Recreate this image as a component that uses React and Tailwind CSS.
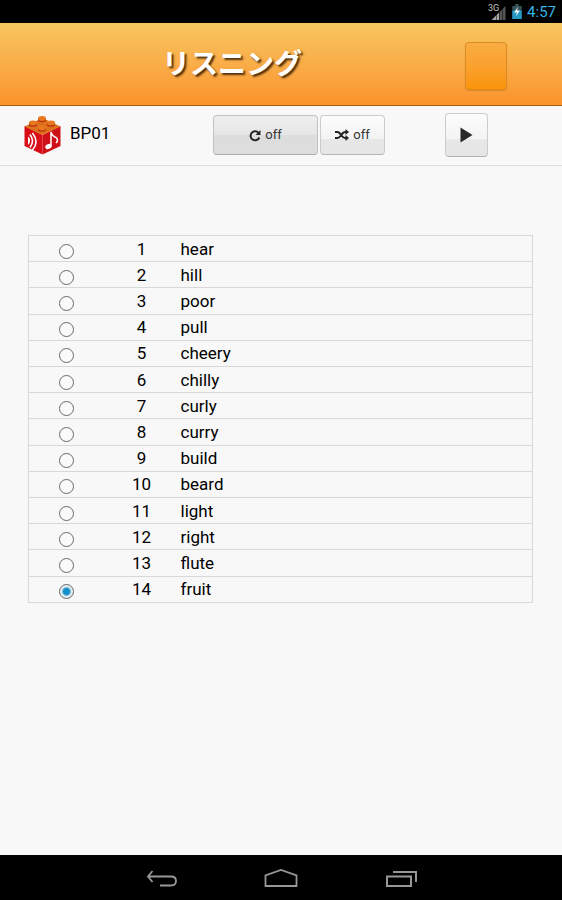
import { useState } from 'react';

const words = [
  'hear', 'hill', 'poor', 'pull', 'cheery', 'chilly', 'curly',
  'curry', 'build', 'beard', 'light', 'right', 'flute', 'fruit',
];

function StatusBar() {
  return (
    <div className="flex h-[23px] shrink-0 items-center justify-end bg-black pr-[6px] font-[Roboto,sans-serif]">
      <svg width="18" height="18" viewBox="0 0 18 18" aria-label="3G signal" role="img">
        <path d="M17.500 3V17H14.500V6ZM14 6.500V17H11.500V9Z" fill="#555" />
        <path d="M11 9.500V17H8.500V12ZM8 12.500V17H3.500Z" fill="#a4a4a4" />
        <text x="0" y="8" fontSize="9" fill="#c4c4c4" fontFamily="Roboto, sans-serif">3G</text>
      </svg>
      <svg className="ml-[6px]" width="10" height="15" viewBox="0 0 10 16" aria-label="Battery" role="img">
        <path d="M3 0H7V2H10V16H0V2H3Z" fill="#34515c" />
        <path d="M0 7H10V16H0Z" fill="#279ac4" />
        <path d="M6 3L2 9H5L4 13L8 7H5Z" fill="#fff" />
      </svg>
      <span className="ml-[5px] pt-[2px] text-[15px] leading-[21px] text-[#33b5e5]">4:57</span>
    </div>
  );
}

function BrickIcon() {
  return (
    <svg className="shrink-0" width="37" height="40" viewBox="0 0 37 40" aria-hidden="true">
      <path d="M0.500 11L18.500 20V39.500L0.500 31Z" fill="#d80d18" />
      <path d="M36.500 11L18.500 20V39.500L36.500 31Z" fill="#d01019" />
      <path d="M18.500 3L36.500 11.500L18.500 20L0.500 11.500Z" fill="#de6f1c" />
      {[[18, 3.5], [9, 8], [27, 8], [18, 13]].map(([x, y]) => (
        <g key={`${x}-${y}`}>
          <path d={`M${x - 4} ${y}V${y + 1.5}A4 2.200 0 0 0 ${x + 4} ${y + 1.5}V${y}Z`} fill="#b8300f" />
          <ellipse cx={x} cy={y} rx="4" ry="2.400" fill="#e8781f" />
        </g>
      ))}
      <path d="M4 21.500Q8.500 25 4 30Z" fill="#fff" />
      <path d="M6 19.500Q11 26 6 32.500M8.500 18Q15.500 27 8.500 35" fill="none" stroke="#fff" strokeWidth="1.600" />
      <ellipse cx="24.500" cy="31.500" rx="3.300" ry="2.500" fill="#fff" transform="rotate(-20 24.500 31.500)" />
      <path d="M27 31V17Q28 21 32 22.500Q35 25 32 28" fill="none" stroke="#fff" strokeWidth="1.500" />
    </svg>
  );
}

function RepeatIcon() {
  return (
    <svg width="12" height="13" viewBox="0 0 12 13" aria-hidden="true">
      <path d="M9.500 3.800A4.500 4.500 0 1 0 10.300 8.500" fill="none" stroke="#252525" strokeWidth="2" />
      <path d="M11.500 1V6H6.500Z" fill="#252525" />
    </svg>
  );
}

function ShuffleIcon() {
  return (
    <svg width="14" height="12" viewBox="0 0 14 12" aria-hidden="true">
      <path d="M0 3H2.500C6 3 6.500 9 10 9H11M0 9H2.500C6 9 6.500 3 10 3H11" fill="none" stroke="#252525" strokeWidth="2.200" />
      <path d="M10.500 0L14 3L10.500 6ZM10.500 6L14 9L10.500 12Z" fill="#252525" />
    </svg>
  );
}

export default function App() {
  const [selected, setSelected] = useState(13);

  return (
    <div className="flex min-h-screen flex-col bg-[#f8f8f8] font-[Roboto,sans-serif] text-black">
      <StatusBar />

      <header className="flex h-[83px] shrink-0 items-center border-b border-[#a85b16] bg-linear-to-b from-[#f7c65f] to-[#fa932b]">
        <h1 className="flex-1 pb-1 text-center font-['Noto_Sans_CJK_JP',sans-serif] text-[28px] leading-[40px] font-bold text-white [text-shadow:2px_2px_2px_#53300c]">
          リスニング
        </h1>
        <div className="flex w-[98px] shrink-0 pt-1">
          <button
            type="button"
            aria-label="Menu"
            className="ml-px h-12 w-[42px] rounded-[4px] border border-[#dc8a24] bg-linear-to-b from-[#f9ad42] to-[#fb9406] shadow-[0_1px_1px_#b86d1a80]"
          />
        </div>
      </header>

      <section className="flex h-[60px] shrink-0 items-center border-b border-[#dedede] pr-[74px] pb-px pl-6" aria-label="Player">
        <div className="flex w-[189px] items-center gap-[9px]">
          <BrickIcon />
          <h2 className="pb-1 text-[17px] leading-6">BP01</h2>
        </div>
        <div className="flex gap-[2px]">
          <button
            type="button"
            aria-pressed="true"
            className="flex h-10 w-[105px] items-center justify-center gap-1 rounded-[4px] border border-[#c2c2c2] border-b-[#aaa] bg-[linear-gradient(#eeeeee,#e6e6e6_50%,#dcdcdc_51%,#dedede)] text-[13px] text-[#333]"
          >
            <RepeatIcon />
            off
          </button>
          <button
            type="button"
            className="flex h-10 w-[65px] items-center justify-center gap-1 rounded-[4px] border border-[#cccccc] border-b-[#b5b5b5] bg-[linear-gradient(#fcfcfc,#f3f3f3_60%,#e7e7e7_61%,#e6e6e6)] text-[13px] text-[#333]"
          >
            <ShuffleIcon />
            off
          </button>
        </div>
        <button
          type="button"
          aria-label="Play"
          className="ml-auto flex h-11 w-[43px] items-center justify-center rounded-[4px] border border-[#cccccc] border-b-[#b0b0b0] bg-[linear-gradient(#fcfcfc,#f3f3f3_60%,#e7e7e7_61%,#e6e6e6)]"
        >
          <svg width="13" height="16" viewBox="0 0 13 16" aria-hidden="true">
            <path d="M0.500 0.500L12.500 8L0.500 15.500Z" fill="#292929" />
          </svg>
        </button>
      </section>

      <main className="flex-1 pt-[69px] pr-[29px] pb-8 pl-7">
        <table className="h-[368px] w-full table-fixed border-collapse border border-[#d8d8d8] text-[17px] leading-5">
          <colgroup>
            <col className="w-[76px]" />
            <col className="w-[74px]" />
            <col />
          </colgroup>
          <tbody>
            {words.map((word, i) => (
              <tr key={word} className="border-b border-[#d8d8d8]">
                <td className="p-0 pt-[5px]">
                  <input
                    id={`word-${i}`}
                    type="radio"
                    name="word"
                    checked={selected === i}
                    onChange={() => setSelected(i)}
                    className="mx-auto block size-[15px] appearance-none rounded-full border border-[#696969] bg-[#fafafa] checked:bg-[radial-gradient(circle,#1590c8_3px,#e4eef2_5px)]"
                  />
                </td>
                <td className="p-0 text-center">{i + 1}</td>
                <td className="p-0 pl-0.5">
                  <label htmlFor={`word-${i}`} className="block">{word}</label>
                </td>
              </tr>
            ))}
          </tbody>
        </table>
      </main>

      <nav className="flex h-[45px] shrink-0 items-center justify-center gap-[86px] bg-black" aria-label="System">
        <button type="button" aria-label="Back">
          <svg width="34" height="20" viewBox="0 0 34 20" fill="none" stroke="#979797" strokeWidth="1.800">
            <path d="M8.500 3L4 8.500L8.500 14M4 8.500H27Q32 8.500 32 13Q32 17.500 27 17.500H16" />
          </svg>
        </button>
        <button type="button" aria-label="Home">
          <svg width="34" height="20" viewBox="0 0 34 20" fill="none" stroke="#979797" strokeWidth="1.800">
            <path d="M1.500 18V7.500L17 2L32.500 7.500V18Z" />
          </svg>
        </button>
        <button type="button" aria-label="Recent apps">
          <svg width="34" height="20" viewBox="0 0 34 20" fill="none" stroke="#979797" strokeWidth="2">
            <path d="M3 8.500H27V18H3ZM9 4H32V14" />
          </svg>
        </button>
      </nav>
    </div>
  );
}
